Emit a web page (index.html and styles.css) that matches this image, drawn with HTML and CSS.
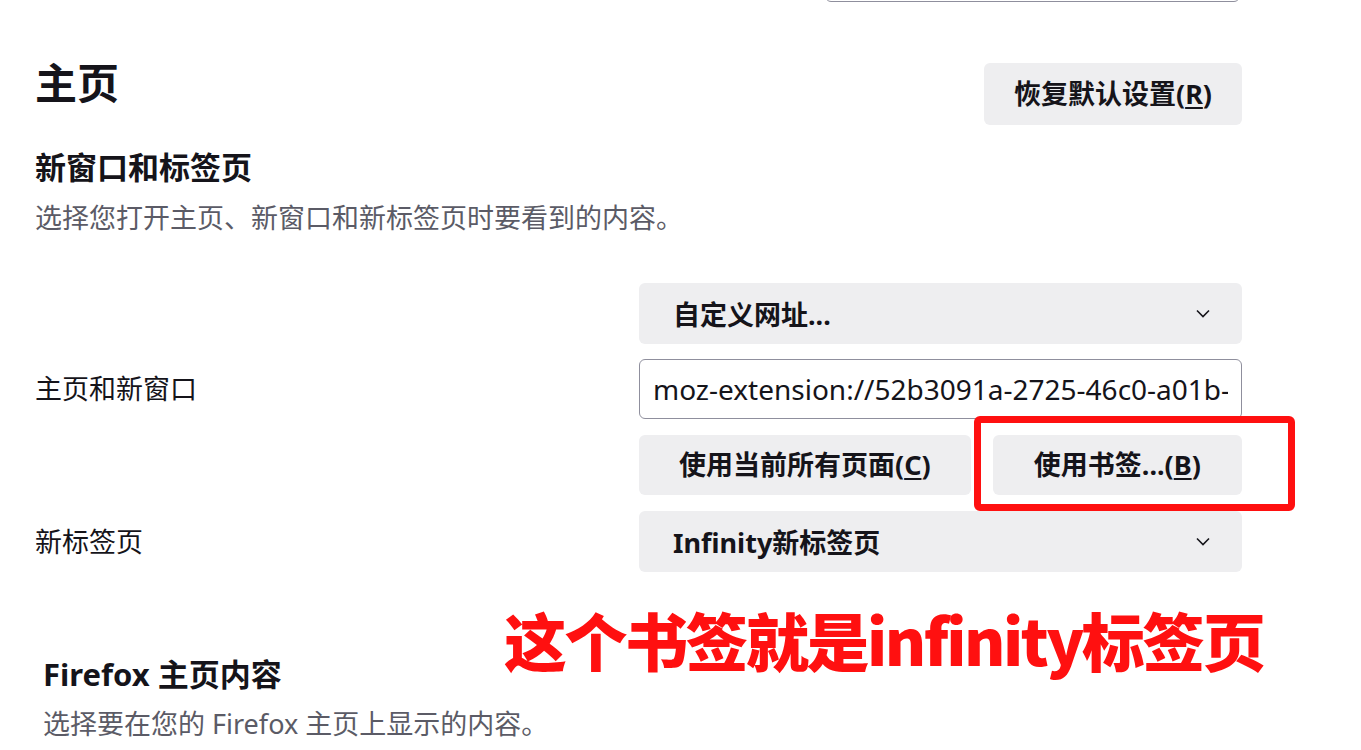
FILE: index.html
```html
<!DOCTYPE html>
<html lang="zh-CN">
  <head>
    <meta charset="UTF-8" />
    <meta name="viewport" content="width=device-width, initial-scale=1.0" />
    <title>设置 - 主页</title>
    <link rel="stylesheet" href="styles.css">
  </head>
  <body>
    <div class="page">
      <div class="search-box"></div>

      <div class="title-row">
        <h1>主页</h1>
        <button class="btn btn-reset">恢复默认设置(<u>R</u>)</button>
      </div>

      <h2>新窗口和标签页</h2>
      <p class="desc">选择您打开主页、新窗口和新标签页时要看到的内容。</p>

      <div class="settings">
        <label class="set-label">主页和新窗口</label>
        <div class="controls">
          <div class="select">
            <span>自定义网址...</span>
            <svg class="chevron" width="14" height="9" viewBox="0 0 14 9">
              <path d="M1 1.5 L7 7.5 L13 1.5" fill="none" stroke="#15141a" stroke-width="1.6" />
            </svg>
          </div>
          <input class="url" type="text" value="moz-extension://52b3091a-2725-46c0-a01b-3d7b1e6c2f44/index.html" />
          <div class="btn-row">
            <button class="btn">使用当前所有页面(<u>C</u>)</button>
            <button class="btn btn-bm">使用书签...(<u>B</u>)</button>
          </div>
        </div>

        <label class="set-label">新标签页</label>
        <div class="controls">
          <div class="select">
            <span>Infinity新标签页</span>
            <svg class="chevron" width="14" height="9" viewBox="0 0 14 9">
              <path d="M1 1.5 L7 7.5 L13 1.5" fill="none" stroke="#15141a" stroke-width="1.6" />
            </svg>
          </div>
        </div>
      </div>

      <div class="sub-section">
        <h2>Firefox 主页内容</h2>
        <p class="desc">选择要在您的 Firefox 主页上显示的内容。</p>
      </div>

      <!-- annotations drawn over the screenshot -->
      <div class="mark-box"></div>
      <div class="mark-text">这个书签就是infinity标签页</div>
    </div>
  </body>
</html>
```

FILE: styles.css
```css
* {
  box-sizing: border-box;
  margin: 0;
  padding: 0;
}
body {
  font-family: "Noto Sans", "Noto Sans CJK SC", sans-serif;
  color: #15141a;
  background: #fff;
  overflow: hidden;
}
.page {
  position: relative;
  display: flow-root;
  width: 1361px;
  height: 750px;
  padding-left: 35px;
}
.search-box {
  margin-left: 790px;
  width: 415px;
  height: 62px;
  margin-top: -60px;
  border: 1px solid #8f8f9d;
  border-radius: 6px;
}
.title-row {
  display: flex;
  justify-content: space-between;
  align-items: flex-start;
  width: 1207px;
  margin-top: 56px;
}
h1 {
  font-size: 42px;
  font-weight: 700;
  line-height: 50px;
}
.btn {
  font-family: "Noto Sans", "Noto Sans CJK SC", sans-serif;
  font-size: 27px;
  font-weight: 700;
  color: #15141a;
  background: #eeeef0;
  border: none;
  border-radius: 6px;
  height: 60px;
  padding: 0 36px;
  line-height: 60px;
}
.btn u {
  text-decoration-thickness: 2px;
  text-underline-offset: 3px;
}
.btn-reset {
  height: 62px;
  margin-top: 5px;
  padding: 0 30px;
}
h2 {
  font-size: 31px;
  font-weight: 700;
  line-height: 40px;
  margin-top: 22px;
}
.desc {
  font-size: 27px;
  color: #5b5b66;
  line-height: 40px;
  margin-top: 11px;
}
.settings {
  display: grid;
  grid-template-columns: 604px 603px;
  align-items: center;
  row-gap: 16px;
  margin-top: 45px;
}
.set-label {
  font-size: 27px;
  line-height: 36px;
}
.controls {
  display: flex;
  flex-direction: column;
  gap: 15px;
}
.select {
  display: flex;
  justify-content: space-between;
  align-items: center;
  height: 61px;
  background: #eeeef0;
  border-radius: 6px;
  padding: 0 32px 0 34px;
  font-size: 27px;
  font-weight: 700;
}
.chevron {
  display: block;
}
.url {
  height: 60px;
  border: 1px solid #8f8f9d;
  border-radius: 6px;
  padding: 0 13px;
  font-family: "Noto Sans", "Noto Sans CJK SC", sans-serif;
  font-size: 28px;
  color: #15141a;
  width: 100%;
}
.btn-row {
  display: flex;
  gap: 22px;
  margin-top: 1px;
}
.btn-row .btn {
  padding: 0 40px;
}
.btn-row .btn-bm {
  flex: 1;
}
.sub-section {
  padding-left: 8px;
  margin-top: 82px;
}
.sub-section h2 {
  margin-top: 0;
  font-size: 31px;
}
.sub-section .desc {
  margin-top: 10px;
}
.mark-box {
  position: absolute;
  left: 974px;
  top: 416px;
  width: 321px;
  height: 95px;
  border: 7px solid #ff1010;
  border-radius: 6px;
}
.mark-text {
  position: absolute;
  left: 504px;
  top: 594px;
  font-family: "Noto Sans CJK SC", sans-serif;
  font-size: 63px;
  font-weight: 900;
  line-height: 90px;
  color: #ff1010;
  letter-spacing: -2.5px;
  white-space: nowrap;
}
```
